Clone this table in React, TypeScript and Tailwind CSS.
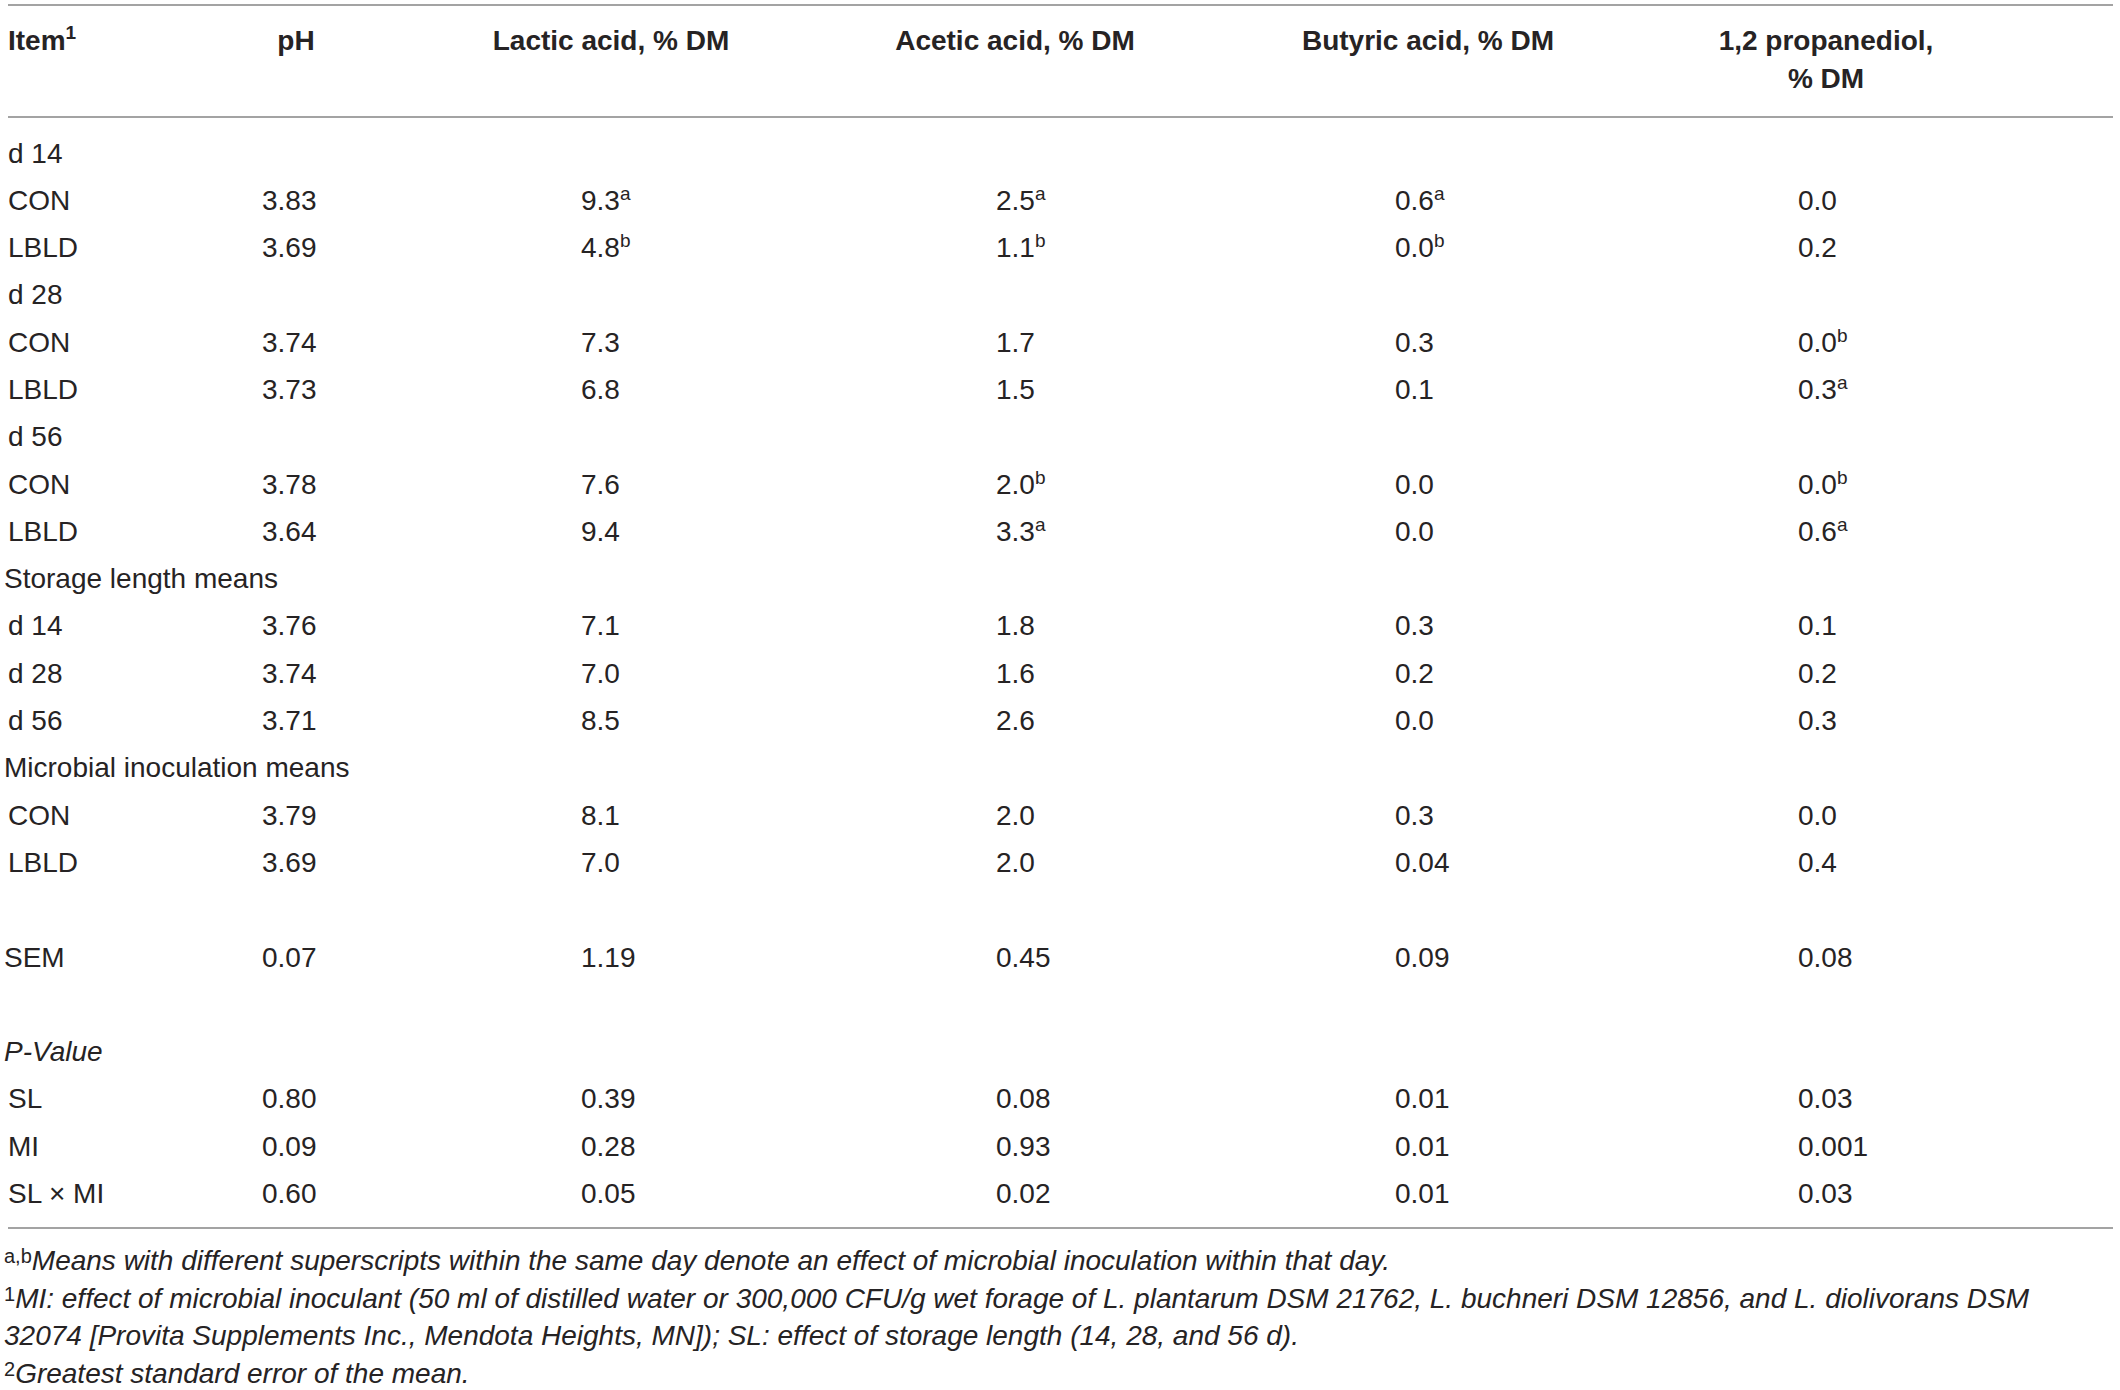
import React from "react";

type Cell = { v: string; s?: string };
type Row = { label: string; kind: "sub" | "cat"; italic?: boolean; cells?: Cell[] };

const c = (v: string, s?: string): Cell => ({ v, s });

const rows: Row[] = [
  { label: "d 14", kind: "sub" },
  { label: "CON", kind: "sub", cells: [c("3.83"), c("9.3", "a"), c("2.5", "a"), c("0.6", "a"), c("0.0")] },
  { label: "LBLD", kind: "sub", cells: [c("3.69"), c("4.8", "b"), c("1.1", "b"), c("0.0", "b"), c("0.2")] },
  { label: "d 28", kind: "sub" },
  { label: "CON", kind: "sub", cells: [c("3.74"), c("7.3"), c("1.7"), c("0.3"), c("0.0", "b")] },
  { label: "LBLD", kind: "sub", cells: [c("3.73"), c("6.8"), c("1.5"), c("0.1"), c("0.3", "a")] },
  { label: "d 56", kind: "sub" },
  { label: "CON", kind: "sub", cells: [c("3.78"), c("7.6"), c("2.0", "b"), c("0.0"), c("0.0", "b")] },
  { label: "LBLD", kind: "sub", cells: [c("3.64"), c("9.4"), c("3.3", "a"), c("0.0"), c("0.6", "a")] },
  { label: "Storage length means", kind: "cat" },
  { label: "d 14", kind: "sub", cells: [c("3.76"), c("7.1"), c("1.8"), c("0.3"), c("0.1")] },
  { label: "d 28", kind: "sub", cells: [c("3.74"), c("7.0"), c("1.6"), c("0.2"), c("0.2")] },
  { label: "d 56", kind: "sub", cells: [c("3.71"), c("8.5"), c("2.6"), c("0.0"), c("0.3")] },
  { label: "Microbial inoculation means", kind: "cat" },
  { label: "CON", kind: "sub", cells: [c("3.79"), c("8.1"), c("2.0"), c("0.3"), c("0.0")] },
  { label: "LBLD", kind: "sub", cells: [c("3.69"), c("7.0"), c("2.0"), c("0.04"), c("0.4")] },
  { label: "", kind: "cat" },
  { label: "SEM", kind: "cat", cells: [c("0.07"), c("1.19"), c("0.45"), c("0.09"), c("0.08")] },
  { label: "", kind: "cat" },
  { label: "P-Value", kind: "cat", italic: true },
  { label: "SL", kind: "sub", cells: [c("0.80"), c("0.39"), c("0.08"), c("0.01"), c("0.03")] },
  { label: "MI", kind: "sub", cells: [c("0.09"), c("0.28"), c("0.93"), c("0.01"), c("0.001")] },
  { label: "SL × MI", kind: "sub", cells: [c("0.60"), c("0.05"), c("0.02"), c("0.01"), c("0.03")] },
];

function Sup({ children }: { children: React.ReactNode }) {
  return <span className="relative top-[-10px] text-[19px] leading-none not-italic">{children}</span>;
}

function NoteSup({ children }: { children: React.ReactNode }) {
  return <span className="relative top-[-7px] text-[20px] leading-none not-italic">{children}</span>;
}

function Rule() {
  return <div className="ml-[8px] mr-[7px] h-[2px] bg-[#a3a3a3]" />;
}

export default function App() {
  return (
    <div className="w-[2120px] h-[1390px] overflow-hidden bg-white text-[#262324] font-['Liberation_Sans',Arial,sans-serif] text-[28px] pt-[4px]">
      <Rule />
      <div className="grid grid-cols-[196px_200px_430px_378px_448px_348px_1fr] pt-[15.5px] pb-[18.5px] leading-[38px] font-bold">
        <div className="pl-[8px] whitespace-nowrap">
          Item<span className="relative top-[-11px] text-[19px] leading-none">1</span>
        </div>
        <div className="text-center whitespace-nowrap">pH</div>
        <div className="text-center whitespace-nowrap">Lactic acid, % DM</div>
        <div className="text-center whitespace-nowrap">Acetic acid, % DM</div>
        <div className="text-center whitespace-nowrap">Butyric acid, % DM</div>
        <div className="text-center whitespace-nowrap">
          1,2 propanediol,
          <br />% DM
        </div>
        <div />
      </div>
      <Rule />
      <div className="pt-[11.5px] pb-[10px]">
        {rows.map((r, i) => (
          <div
            key={i}
            className="grid grid-cols-[262px_319px_415px_399px_403px_1fr] h-[47.3px] leading-[47.3px] whitespace-nowrap"
          >
            <div className={(r.kind === "sub" ? "pl-[8px]" : "pl-[4px]") + (r.italic ? " italic" : "")}>{r.label}</div>
            {(r.cells ?? [c(""), c(""), c(""), c(""), c("")]).map((cell, j) => (
              <div key={j}>
                {cell.v}
                {cell.s ? <Sup>{cell.s}</Sup> : null}
              </div>
            ))}
          </div>
        ))}
      </div>
      <Rule />
      <div className="pl-[4px] pr-[7px] pt-[13px] italic leading-[37.5px]">
        <p>
          <NoteSup>a,b</NoteSup>Means with different superscripts within the same day denote an effect of microbial inoculation within that day.
        </p>
        <p>
          <NoteSup>1</NoteSup>MI: effect of microbial inoculant (50 ml of distilled water or 300,000 CFU/g wet forage of L. plantarum DSM 21762, L. buchneri DSM 12856, and L. diolivorans DSM 32074 [Provita Supplements Inc., Mendota Heights, MN]); SL: effect of storage length (14, 28, and 56 d).
        </p>
        <p>
          <NoteSup>2</NoteSup>Greatest standard error of the mean.
        </p>
      </div>
    </div>
  );
}
